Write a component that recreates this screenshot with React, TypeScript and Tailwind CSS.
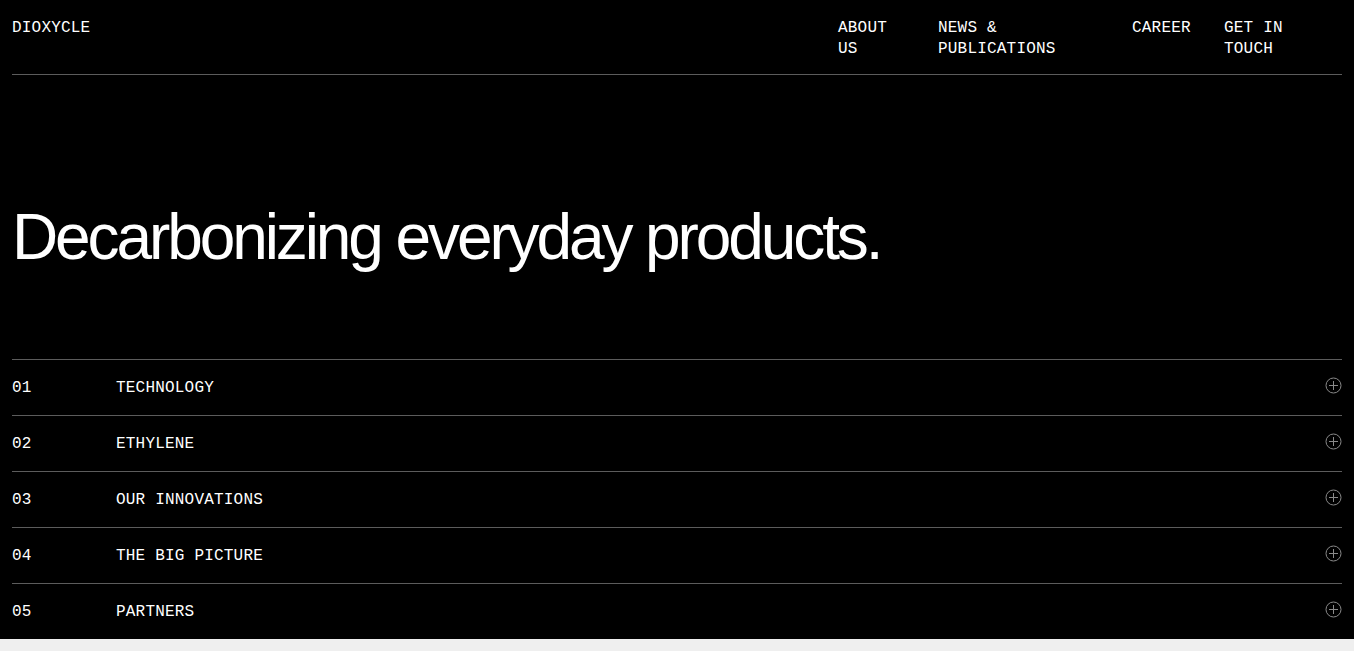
import React from "react";

const NAV = [
  { label: "ABOUT US", w: "w-[100px]", max: "max-w-[60px]" },
  { label: "NEWS & PUBLICATIONS", w: "w-[194px]", max: "max-w-[130px]" },
  { label: "CAREER", w: "w-[92px]", max: "max-w-[80px]" },
  { label: "GET IN TOUCH", w: "w-[118px]", max: "max-w-[80px]" },
];

const ITEMS = [
  { id: "01", title: "TECHNOLOGY" },
  { id: "02", title: "ETHYLENE" },
  { id: "03", title: "OUR INNOVATIONS" },
  { id: "04", title: "THE BIG PICTURE" },
  { id: "05", title: "PARTNERS" },
];

const mono = "font-['Liberation_Mono','DejaVu_Sans_Mono',monospace]";

function PlusCircle() {
  return (
    <svg width="17" height="17" viewBox="0 0 17 17" className="text-[#8a8a8a]">
      <circle cx="8.5" cy="8.5" r="7.5" fill="none" stroke="currentColor" strokeWidth="1" />
      <path d="M8.5 4v9M4 8.5h9" stroke="currentColor" strokeWidth="1" />
    </svg>
  );
}

export default function App() {
  return (
    <div className="min-h-screen bg-white">
      <div className="w-[1354px]">
        <section className="bg-black text-white h-[639px] px-3 flex flex-col">
          {/* Header */}
          <header className={`flex justify-between border-b border-[#5c5c5c] pt-[18px] pb-[14px] ${mono} text-[16px] leading-[21px] tracking-[0.2px]`}>
            <div>DIOXYCLE</div>
            <nav className="flex">
              {NAV.map((n) => (
                <div key={n.label} className={n.w}>
                  <div className={n.max}>{n.label}</div>
                </div>
              ))}
            </nav>
          </header>

          {/* Hero */}
          <h1 className="mt-[129px] font-['Liberation_Sans',Arial,sans-serif] text-[64px] leading-[66px] tracking-[-3.1px]">
            Decarbonizing everyday products.
          </h1>

          {/* Accordion */}
          <div className="mt-[89px]">
            {ITEMS.map((item) => (
              <div
                key={item.id}
                className={`flex items-center h-[56px] border-t border-[#5c5c5c] ${mono} text-[16px] tracking-[0.2px]`}
              >
                <span className="w-[104px]">{item.id}</span>
                <span className="flex-1">{item.title}</span>
                <span className="-mt-[5px]">
                  <PlusCircle />
                </span>
              </div>
            ))}
          </div>
        </section>
        <div className="h-[12px] bg-[#efefef]" />
      </div>
    </div>
  );
}
